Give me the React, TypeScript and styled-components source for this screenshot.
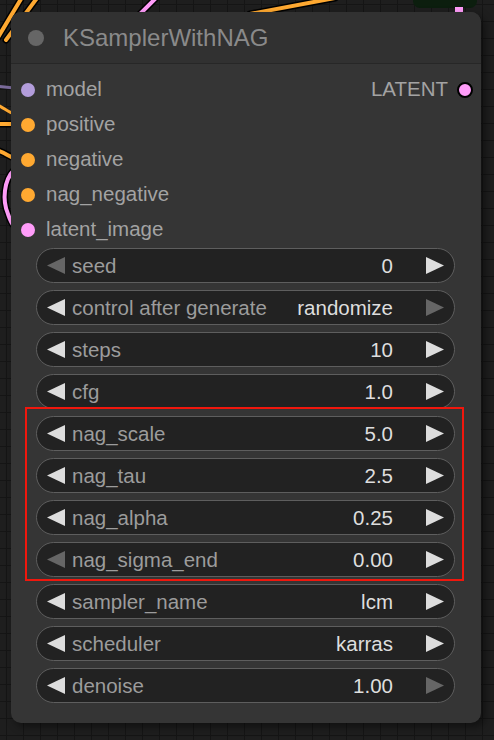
import React from "react";
import styled, { createGlobalStyle } from "styled-components";

const GlobalStyle = createGlobalStyle`
  html, body {
    margin: 0;
    padding: 0;
    background: #1f1f1f;
  }
  body {
    font-family: "Liberation Sans", Arial, sans-serif;
  }
`;

interface Slot {
  name: string;
  color: string;
}

interface Widget {
  label: string;
  value: string;
  leftOff?: boolean;
  rightOff?: boolean;
}

const inputs: Slot[] = [
  { name: "model", color: "#b39ddb" },
  { name: "positive", color: "#ffa931" },
  { name: "negative", color: "#ffa931" },
  { name: "nag_negative", color: "#ffa931" },
  { name: "latent_image", color: "#ff9cf9" },
];

const before: Widget[] = [
  { label: "seed", value: "0", leftOff: true },
  { label: "control after generate", value: "randomize", rightOff: true },
  { label: "steps", value: "10" },
  { label: "cfg", value: "1.0" },
];

const nag: Widget[] = [
  { label: "nag_scale", value: "5.0" },
  { label: "nag_tau", value: "2.5" },
  { label: "nag_alpha", value: "0.25" },
  { label: "nag_sigma_end", value: "0.00", leftOff: true },
];

const after: Widget[] = [
  { label: "sampler_name", value: "lcm" },
  { label: "scheduler", value: "karras" },
  { label: "denoise", value: "1.00", rightOff: true },
];

export default function App(): JSX.Element {
  return (
    <>
      <GlobalStyle />
      <Canvas>
        <Wires width="494" height="740" viewBox="0 0 494 740">
          <g fill="none" strokeLinecap="round">
            <path d="M-6 44 L24 -6" stroke="#000" strokeWidth="7" />
            <path d="M-6 44 L24 -6" stroke="#ffa931" strokeWidth="4" />
            <path d="M6 40 L40 -6" stroke="#000" strokeWidth="7" />
            <path d="M6 40 L40 -6" stroke="#ffa931" strokeWidth="4" />
            <path d="M138 16 L158 -4" stroke="#000" strokeWidth="7" />
            <path d="M138 16 L158 -4" stroke="#ff9cf9" strokeWidth="4" />
            <path d="M250 14 L335 -2" stroke="#000" strokeWidth="7" />
            <path d="M250 14 L335 -2" stroke="#ffa931" strokeWidth="4" />
            <path d="M-4 124 L14 124" stroke="#000" strokeWidth="7" />
            <path d="M-4 124 L14 124" stroke="#ffa931" strokeWidth="4" />
            <path d="M-4 150 C4 152 8 156 14 158" stroke="#000" strokeWidth="7" />
            <path d="M-4 150 C4 152 8 156 14 158" stroke="#ffa931" strokeWidth="4" />
            <path d="M14 170 C4 180 2 200 8 214 C10 220 12 224 14 226" stroke="#000" strokeWidth="7" />
            <path d="M14 170 C4 180 2 200 8 214 C10 220 12 224 14 226" stroke="#ff9cf9" strokeWidth="4" />
            <path d="M-4 86 L14 88" stroke="#7a6a9a" strokeWidth="3" />
            <path d="M-4 104 C4 108 8 112 14 114" stroke="#ffa931" strokeWidth="3" />
          </g>
          <rect x="413" y="-10" width="64" height="18" rx="7" fill="#0c1e0e" />
          <rect x="455" y="7" width="8" height="5" fill="#ff9cf9" />
        </Wires>
        <Node>
          <TitleBar>
            <TitleDot />
            <Title>KSamplerWithNAG</Title>
          </TitleBar>
          <Body>
            <Slots>
              {inputs.map((slot, i) => (
                <SlotRow key={slot.name}>
                  <SlotIn>
                    <Dot $color={slot.color} />
                    <SlotLabel>{slot.name}</SlotLabel>
                  </SlotIn>
                  {i === 0 && (
                    <SlotOut>
                      <SlotLabel>LATENT</SlotLabel>
                      <Dot $color="#ff9cf9" $outlined />
                    </SlotOut>
                  )}
                </SlotRow>
              ))}
            </Slots>
            <Widgets>
              {before.map((w) => (
                <WidgetRow key={w.label} widget={w} />
              ))}
              <Highlight>
                {nag.map((w) => (
                  <WidgetRow key={w.label} widget={w} />
                ))}
              </Highlight>
              {after.map((w) => (
                <WidgetRow key={w.label} widget={w} />
              ))}
            </Widgets>
          </Body>
        </Node>
      </Canvas>
    </>
  );
}

function WidgetRow({ widget }: { widget: Widget }) {
  return (
    <Pill>
      <Arrow $off={widget.leftOff} />
      <PillLabel>{widget.label}</PillLabel>
      <PillValue>{widget.value}</PillValue>
      <Arrow $off={widget.rightOff} $right />
    </Pill>
  );
}

function Arrow({ $off, $right }: { $off?: boolean; $right?: boolean }) {
  return (
    <ArrowIcon width="18" height="17" viewBox="0 0 18 17">
      <polygon
        points={$right ? "0,0 18,8.5 0,17" : "18,0 0,8.5 18,17"}
        fill={$off ? "#666" : "#ddd"}
      />
    </ArrowIcon>
  );
}

const Canvas = styled.div`
  position: relative;
  width: 494px;
  height: 740px;
  overflow: hidden;
  padding: 12px 0 0 11px;
  box-sizing: border-box;
  background-color: #1e1e1e;
  background-image: linear-gradient(#151515 1px, transparent 1px),
    linear-gradient(90deg, #151515 1px, transparent 1px);
  background-size: 17px 17px;
  background-position: 6px 4px;
`;

const Wires = styled.svg`
  position: absolute;
  left: 0;
  top: 0;
`;

const Node = styled.div`
  position: relative;
  width: 470px;
  height: 711px;
  background: #353535;
  border-radius: 10px;
  box-shadow: 4px 4px 8px rgba(0, 0, 0, 0.45);
  overflow: hidden;
`;

const TitleBar = styled.div`
  display: flex;
  align-items: center;
  height: 51px;
  padding-left: 17px;
  gap: 19px;
  background: #313131;
  border-bottom: 1px solid #272727;
`;

const TitleDot = styled.div`
  width: 16px;
  height: 16px;
  border-radius: 50%;
  background: #666;
`;

const Title = styled.div`
  font-size: 24px;
  color: #8a8a8a;
  margin-top: 1px;
`;

const Body = styled.div`
  padding: 8px 0 0 0;
`;

const Slots = styled.div`
  display: flex;
  flex-direction: column;
`;

const SlotRow = styled.div`
  display: flex;
  justify-content: space-between;
  align-items: center;
  height: 35px;
  padding: 0 8px 0 10px;
`;

const SlotIn = styled.div`
  display: flex;
  align-items: center;
  gap: 11px;
`;

const SlotOut = styled.div`
  display: flex;
  align-items: center;
  gap: 9px;
`;

const Dot = styled.div<{ $color: string; $outlined?: boolean }>`
  width: ${(p) => (p.$outlined ? 16 : 14)}px;
  height: ${(p) => (p.$outlined ? 16 : 14)}px;
  box-sizing: border-box;
  border-radius: 50%;
  background: ${(p) => p.$color};
  border: ${(p) => (p.$outlined ? "2px solid #000" : "none")};
`;

const SlotLabel = styled.span`
  font-size: 20.5px;
  color: #a3a3a3;
  line-height: 1;
`;

const Widgets = styled.div`
  display: flex;
  flex-direction: column;
  gap: 7px;
  padding: 1px 26px 0 25px;
`;

const Highlight = styled.div`
  position: relative;
  display: flex;
  flex-direction: column;
  gap: 7px;
  &::after {
    content: "";
    position: absolute;
    top: -9px;
    left: -11px;
    right: -9px;
    bottom: -4px;
    border: 2px solid #f0170d;
    pointer-events: none;
  }
`;

const Pill = styled.div`
  display: flex;
  align-items: center;
  height: 35px;
  box-sizing: border-box;
  padding: 0 10px 0 10px;
  background: #222;
  border: 1px solid #5e5e5e;
  border-radius: 18px;
`;

const ArrowIcon = styled.svg`
  flex: none;
  display: block;
`;

const PillLabel = styled.span`
  flex: 1;
  margin-left: 7px;
  font-size: 20.5px;
  color: #9c9c9c;
  white-space: nowrap;
`;

const PillValue = styled.span`
  margin-right: 33px;
  font-size: 20.5px;
  color: #dedede;
  white-space: nowrap;
`;
